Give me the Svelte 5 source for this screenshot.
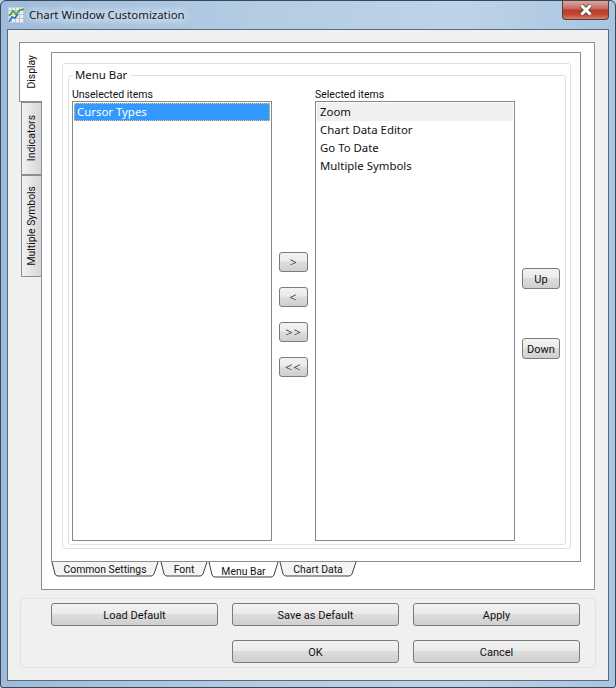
<script>
  const vtabs = [
    { label: 'Display', size: 60, active: true },
    { label: 'Indicators', size: 73 },
    { label: 'Multiple Symbols', size: 102 }
  ];
  const btabs = [
    { label: 'Common Settings', width: 108 },
    { label: 'Font', width: 48 },
    { label: 'Menu Bar', width: 71, active: true },
    { label: 'Chart Data', width: 78 }
  ];
  const selected = ['Zoom', 'Chart Data Editor', 'Go To Date', 'Multiple Symbols'];

  function tabPath(w, h) {
    return `M1 0 L4 ${h - 3} Q5 ${h - 1} 7 ${h - 1} H${w - 8} Q${w - 6} ${h - 1} ${w - 5} ${h - 3} L${w - 1} 0`;
  }
</script>

<div class="window">
  <div class="titlebar">
    <svg class="app-icon" width="16" height="16" viewBox="0 0 16 16">
      <rect x="0.5" y="0.5" width="15" height="15" fill="#eeeef2" />
      <path d="M0 3.5H16M0 7.5H16M0 11.5H16M3.5 0V16M7.5 0V16M11.5 0V16M15.5 0V16" stroke="#c4c4cc" stroke-width="1" fill="none" />
      <path d="M1 15 L4 10 L7 11 L10 7" stroke="#2f6fd0" stroke-width="1.7" fill="none" />
      <path d="M1 9 L5 4 L8 7 L12 3 L16 2" stroke="#35a835" stroke-width="1.7" fill="none" />
    </svg>
    <span class="title">Chart Window Customization</span>
    <div class="close">
      <svg width="16" height="12" viewBox="0 0 16 12">
        <path d="M3.5 1.5 L12.5 10.5 M12.5 1.5 L3.5 10.5" stroke="#5a4a4a" stroke-width="4.6" fill="none" />
        <path d="M3.5 1.5 L12.5 10.5 M12.5 1.5 L3.5 10.5" stroke="#fff" stroke-width="3" fill="none" />
      </svg>
    </div>
  </div>

  <div class="client">
    <div class="top">
      <div class="vtabs">
        {#each vtabs as t}
          <div class="vtab" class:active={t.active} style="height:{t.size}px"><span>{t.label}</span></div>
        {/each}
      </div>
      <div class="outer-pane">
        <div class="inner-pane">
          <div class="group-outer">
            <fieldset>
              <legend>Menu Bar</legend>
              <div class="lists">
                <div class="col">
                  <div class="cap">Unselected items</div>
                  <div class="list">
                    <div class="item sel">Cursor Types</div>
                  </div>
                </div>
                <div class="moves">
                  <button class="small">&gt;</button>
                  <button class="small">&lt;</button>
                  <button class="small">&gt;&gt;</button>
                  <button class="small">&lt;&lt;</button>
                </div>
                <div class="col">
                  <div class="cap">Selected items</div>
                  <div class="list">
                    {#each selected as s, i}
                      <div class="item" class:cur={i === 0}>{s}</div>
                    {/each}
                  </div>
                </div>
                <div class="order">
                  <button class="small wide">Up</button>
                  <button class="small wide">Down</button>
                </div>
              </div>
            </fieldset>
          </div>
        </div>
        <div class="btabs">
          {#each btabs as t}
            {@const h = t.active ? 16 : 15}
            <div class="btab" class:active={t.active} style="width:{t.width}px;height:{h}px">
              <svg width={t.width} height={h} viewBox="0 0 {t.width} {h}">
                <path d={tabPath(t.width, h)} fill={t.active ? '#fff' : '#f4f4f4'} stroke="#3f3f3f" stroke-width="1" />
              </svg>
              <span>{t.label}</span>
            </div>
          {/each}
        </div>
      </div>
    </div>

    <div class="actions">
      <div class="row">
        <button>Load Default</button>
        <button>Save as Default</button>
        <button>Apply</button>
      </div>
      <div class="row end">
        <button>OK</button>
        <button>Cancel</button>
      </div>
    </div>
  </div>
</div>

<style>
  :global(body) {
    margin: 0;
    background: #b9d0e6;
    font-family: "Noto Sans", sans-serif;
    font-size: 11.4px;
    color: #111;
  }

  .window {
    width: 616px;
    height: 688px;
    box-sizing: border-box;
    display: flex;
    flex-direction: column;
    background: linear-gradient(90deg, #9dbcdb 0%, #b3cce4 40%, #bdd3e9 75%, #a9c5e0 100%);
    border: 1px solid #3d4652;
    border-radius: 6px 6px 3px 3px;
    padding: 0 6px 6px;
  }

  .titlebar {
    height: 28px;
    flex: none;
    display: flex;
    align-items: flex-start;
  }

  .app-icon { margin: 6px 5px 0 1px; flex: none; }

  .title {
    margin-top: 6px;
    line-height: 16px;
    color: #10171f;
    text-shadow: 0 0 8px #eef4fa, 0 0 10px #eef4fa, 0 0 12px #eef4fa;
  }

  .close {
    margin-left: auto;
    width: 47px;
    height: 19px;
    box-sizing: border-box;
    border: 1px solid #5a3a3a;
    border-top: none;
    border-radius: 0 0 4px 4px;
    background: linear-gradient(#dca79b 0%, #c9706a 40%, #b93a26 52%, #c04a34 75%, #d0806e 100%);
    display: flex;
    align-items: center;
    justify-content: center;
  }

  .client {
    flex: 1;
    background: #f0f0f0;
    border: 1px solid #5b6a78;
    padding: 12px;
    display: flex;
    flex-direction: column;
    min-height: 0;
  }

  .top {
    display: flex;
    height: 548px;
    flex: none;
    margin-right: 1px;
  }

  .vtabs {
    width: 22px;
    margin-left: -1px;
    flex: none;
    display: flex;
    flex-direction: column;
    z-index: 1;
  }

  .vtab {
    box-sizing: border-box;
    width: 20px;
    margin-left: 2px;
    border: 1px solid #8a8d92;
    border-right: none;
    background: linear-gradient(90deg, #f2f2f2, #d6d6d6);
    display: flex;
    align-items: center;
    justify-content: center;
    font-family: Roboto, sans-serif;
    font-size: 10.4px;
  }

  .vtab.active {
    width: 23px;
    margin-left: 0;
    background: #fff;
  }

  .vtab span {
    writing-mode: vertical-rl;
    transform: rotate(180deg);
    white-space: nowrap;
  }

  .outer-pane {
    flex: 1;
    min-width: 0;
    box-sizing: border-box;
    background: #fff;
    border: 1px solid #8a8d92;
    padding: 9px 13px 0 9px;
  }

  .inner-pane {
    height: 510px;
    box-sizing: border-box;
    border: 1px solid #8a8d92;
    padding: 10px 9px 12px 10px;
  }

  .group-outer {
    height: 100%;
    box-sizing: border-box;
    border: 1px solid #d8e2ea;
    border-radius: 3px;
    padding: 4px 4px 3px 5px;
  }

  fieldset {
    height: 100%;
    box-sizing: border-box;
    margin: 0;
    padding: 5px 4px 3px 3px;
    border: 1px solid #d8e2ea;
    border-radius: 3px;
    min-width: 0;
  }

  legend {
    padding: 0 4px 0 2px;
    margin-left: 1px;
    line-height: 14px;
  }

  .lists {
    display: flex;
    height: 100%;
  }

  .col {
    width: 200px;
    flex: none;
    display: flex;
    flex-direction: column;
  }

  .cap {
    height: 14px;
    line-height: 15px;
    font-family: Roboto, sans-serif;
    font-size: 10.5px;
  }

  .list {
    flex: 1;
    border: 1px solid #85888c;
    background: #fff;
    padding: 1px;
  }

  .item {
    height: 18px;
    line-height: 18px;
    padding-left: 3px;
  }

  .item.sel {
    background: #3399ff;
    color: #fff;
    outline: 1px dotted #f5c76a;
    outline-offset: -1px;
  }

  .item.cur { background: #f0f0f0; }

  .moves {
    width: 43px;
    flex: none;
    display: flex;
    flex-direction: column;
    align-items: center;
    gap: 15px;
    padding-top: 165px;
  }

  .moves button {
    font-family: "Noto Sans", sans-serif;
    font-size: 12.5px;
    font-weight: 300;
    letter-spacing: 1px;
  }

  .order {
    width: 52px;
    margin-right: -10px;
    flex: none;
    display: flex;
    flex-direction: column;
    align-items: center;
    gap: 49px;
    padding-top: 181px;
  }

  button {
    font-family: Roboto, sans-serif;
    font-size: 11px;
    color: #111;
    width: 167px;
    height: 23px;
    padding: 1px 0 0;
    border: 1px solid #7b7b7b;
    border-radius: 3px;
    background: linear-gradient(#f2f2f2 0%, #ebebeb 45%, #dddddd 50%, #cfcfcf 100%);
  }

  button.small { width: 29px; height: 20px; }
  button.wide { width: 38px; height: 21px; }

  .btabs {
    display: flex;
    font-family: Roboto, sans-serif;
    font-size: 10.4px;
  }

  .btab {
    position: relative;
    flex: none;
    display: flex;
    align-items: center;
    justify-content: center;
  }

  .btab:first-child { margin-right: 1px; }

  .btab svg { position: absolute; left: 0; top: 0; }
  .btab span { position: relative; }
  .btab.active span { top: 1px; }

  .actions {
    margin-top: 8px;
    height: 70px;
    box-sizing: border-box;
    border: 1px solid #dfe5ea;
    border-radius: 3px;
    padding: 4px 15px 0 30px;
    display: flex;
    flex-direction: column;
    gap: 14px;
  }

  .row { display: flex; gap: 14px; }
  .row.end { justify-content: flex-end; }
</style>
